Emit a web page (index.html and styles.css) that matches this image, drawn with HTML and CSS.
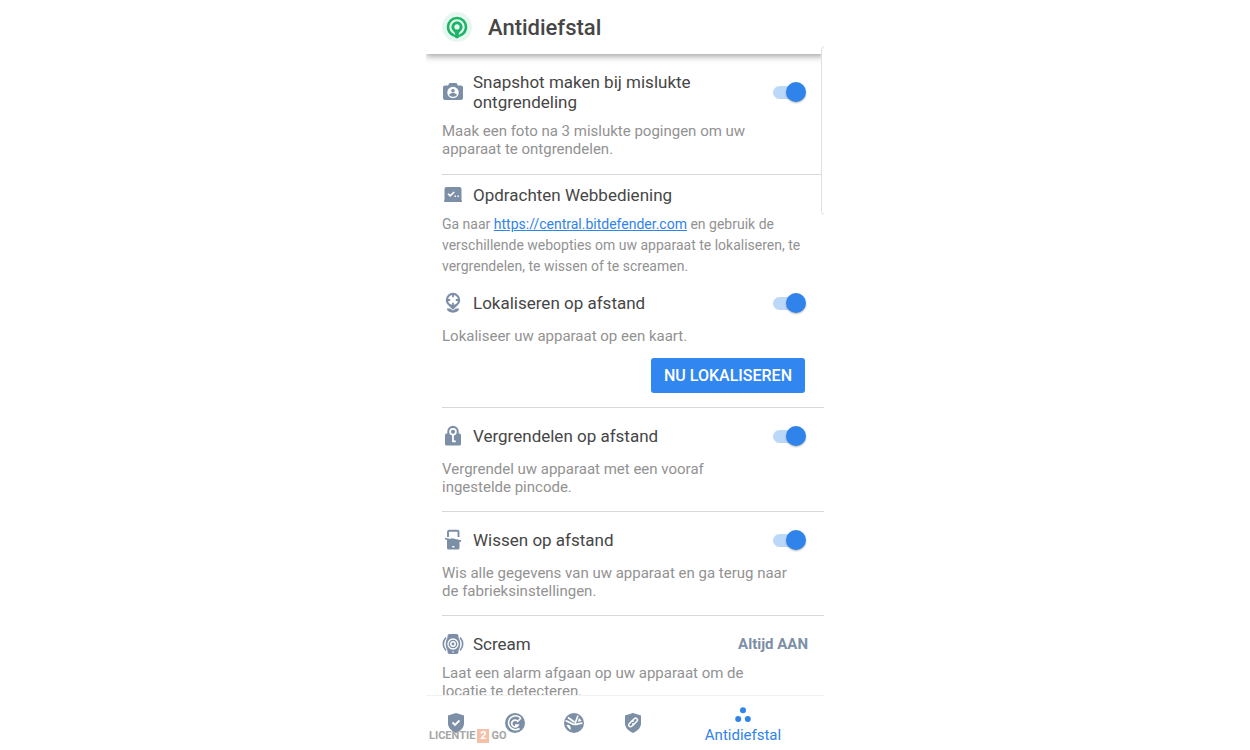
FILE: index.html
```html
<!DOCTYPE html>
<html lang="nl">
<head>
<meta charset="utf-8">
<meta name="viewport" content="width=device-width, initial-scale=1">
<title>Antidiefstal</title>
<link rel="stylesheet" href="styles.css">
</head>
<body>
<div class="app">
  <header class="topbar">
    <svg class="logo" viewBox="0 0 32 32" aria-hidden="true">
      <circle cx="16" cy="15" r="15" fill="#e6f7ef"/>
      <path d="M13 23.500c-3.500-1.600-6-4.500-6-8.500a9 9 0 0 1 18 0c0 4-2.500 6.900-6 8.500" fill="none" stroke="#1cb567" stroke-width="2.600"/>
      <path d="M16 9.300a5.600 5.600 0 0 0-5.600 5.600c0 3.300 3.600 4.600 4 7.600l-2.600.8c1.400 1.200 2.600 3.200 4.200 3.200s2.800-2 4.200-3.200l-2.600-.8c.4-3 4-4.300 4-7.600A5.600 5.600 0 0 0 16 9.300z" fill="#1cb567"/>
      <circle cx="16" cy="14.900" r="2.600" fill="#e6f7ef"/>
    </svg>
    <h1 class="page-title">Antidiefstal</h1>
  </header>

  <main class="content">
    <section class="card card-compact">
      <div class="row">
        <svg class="icon" viewBox="0 0 22 22" aria-hidden="true">
          <path fill="#7c8fa6" d="M7.500 2h7l1.500 2.500h3a2 2 0 0 1 2 2V17a2 2 0 0 1-2 2H3a2 2 0 0 1-2-2V6.500a2 2 0 0 1 2-2h3z"/>
          <circle cx="11" cy="11.500" r="5.700" fill="#fff"/>
          <circle cx="11" cy="9.700" r="1.800" fill="#7c8fa6"/>
          <path fill="#7c8fa6" d="M7 13.700c1.700-2.200 6.300-2.200 8 0-1.700 2.800-6.300 2.800-8 0z"/>
        </svg>
        <label class="title" for="snapshot">Snapshot maken bij mislukte ontgrendeling</label>
        <input class="switch" type="checkbox" role="switch" id="snapshot" checked>
      </div>
      <p class="text text-narrow">Maak een foto na 3 mislukte pogingen om uw apparaat te ontgrendelen.</p>
    </section>

    <section class="card card-web">
      <div class="row">
        <svg class="icon" viewBox="0 0 22 22" aria-hidden="true">
          <path fill="#7c8fa6" d="M4.500 3h13a2 2 0 0 1 2 2v10.500l.5 2.500H2l.5-2.500V5a2 2 0 0 1 2-2z"/>
          <path d="M6 9.700l2.200 2.200L12.200 8" fill="none" stroke="#fff" stroke-width="1.600"/>
          <path d="M12.500 12.200h1.500m1.400 0h1.500" stroke="#fff" stroke-width="1.500"/>
        </svg>
        <h2 class="title">Opdrachten Webbediening</h2>
      </div>
      <p class="text text-web">Ga naar <a class="link" href="https://central.bitdefender.com">https://central.bitdefender.com</a> en gebruik de verschillende webopties om uw apparaat te lokaliseren, te vergrendelen, te wissen of te screamen.</p>
    </section>

    <section class="card card-locate">
      <div class="row">
        <svg class="icon" viewBox="0 0 22 22" aria-hidden="true">
          <path fill="#7c8fa6" d="M11 .8a7.200 7.200 0 0 0-7.200 7.200c0 4 3.800 6.300 7.200 9.700 3.400-3.400 7.200-5.700 7.200-9.700A7.200 7.200 0 0 0 11 .8z"/>
          <circle cx="11" cy="8" r="5" fill="#fff"/>
          <path d="M11 3v2.200m0 5.600V13M6 8h2.200m5.600 0H16" stroke="#7c8fa6" stroke-width="1.800"/>
          <path fill="#7c8fa6" d="M4.800 16.600h3.400l2.800 2 2.800-2h3.400c-.6 5.400-11.800 5.400-12.400 0z"/>
        </svg>
        <label class="title" for="locate">Lokaliseren op afstand</label>
        <input class="switch" type="checkbox" role="switch" id="locate" checked>
      </div>
      <p class="text">Lokaliseer uw apparaat op een kaart.</p>
      <button class="button" type="button">NU LOKALISEREN</button>
    </section>

    <section class="card">
      <div class="row">
        <svg class="icon" viewBox="0 0 22 22" aria-hidden="true">
          <path fill="#7c8fa6" d="M11 .8a5.700 5.700 0 0 0-5.700 5.700v2H4.500A1.500 1.500 0 0 0 3 10v9a1.500 1.500 0 0 0 1.500 1.500h13A1.500 1.500 0 0 0 19 19v-9a1.500 1.500 0 0 0-1.500-1.500h-.8v-2A5.700 5.700 0 0 0 11 .8z"/>
          <circle cx="11" cy="6.800" r="2.900" fill="none" stroke="#fff" stroke-width="1.700"/>
          <path d="M11 9.500v7.700M11 16.400h2.800" fill="none" stroke="#fff" stroke-width="1.800"/>
        </svg>
        <label class="title" for="lock">Vergrendelen op afstand</label>
        <input class="switch" type="checkbox" role="switch" id="lock" checked>
      </div>
      <p class="text text-narrow">Vergrendel uw apparaat met een vooraf ingestelde pincode.</p>
    </section>

    <section class="card">
      <div class="row">
        <svg class="icon" viewBox="0 0 22 22" aria-hidden="true">
          <path d="M6 8V2.800a1 1 0 0 1 1-1h8.500a1 1 0 0 1 1 1V8" fill="none" stroke="#7c8fa6" stroke-width="1.900"/>
          <path d="M3 9.500l5 1.300 2-.6 9 2" fill="none" stroke="#7c8fa6" stroke-width="1.800"/>
          <path fill="#7c8fa6" d="M5 10l3 .8 2-.6 7.500 1.600v7.200a1.500 1.500 0 0 1-1.500 1.500H6.500A1.500 1.500 0 0 1 5 19z"/>
          <path d="M10.200 17.700h2.200" stroke="#fff" stroke-width="1.500"/>
        </svg>
        <label class="title" for="wipe">Wissen op afstand</label>
        <input class="switch" type="checkbox" role="switch" id="wipe" checked>
      </div>
      <p class="text">Wis alle gegevens van uw apparaat en ga terug naar de fabrieksinstellingen.</p>
    </section>

    <section class="card card-compact card-last">
      <div class="row">
        <svg class="icon" viewBox="0 0 22 22" aria-hidden="true">
          <path fill="#7c8fa6" d="M7.500 1h7a2 2 0 0 1 2 2v1.500q3.600 6.500 0 13V19a2 2 0 0 1-2 2h-7a2 2 0 0 1-2-2v-1.500q-3.600-6.500 0-13V3a2 2 0 0 1 2-2z"/>
          <path d="M3.900 4.500q-5.200 6.500 0 13M18.100 4.500q5.200 6.500 0 13" fill="none" stroke="#7c8fa6" stroke-width="1.600"/>
          <circle cx="11" cy="11" r="5" fill="none" stroke="#fff" stroke-width="1.300"/>
          <circle cx="11" cy="11" r="2.200" fill="none" stroke="#fff" stroke-width="1.500"/>
          <path d="M10.200 19h1.600" stroke="#fff" stroke-width="1.200"/>
        </svg>
        <h2 class="title">Scream</h2>
        <span class="status">Altijd AAN</span>
      </div>
      <p class="text text-narrow">Laat een alarm afgaan op uw apparaat om de locatie te detecteren.</p>
    </section>
  </main>

  <nav class="tabs">
    <a class="tab" href="#bescherming" aria-label="Bescherming">
      <svg class="tab-icon" viewBox="0 0 22 22" aria-hidden="true">
        <path fill="#7c8fa6" d="M11 1l8 2.500v7.700c0 4.800-3.800 7.800-8 9.800-4.200-2-8-5-8-9.800V3.500z"/>
        <path d="M7.500 10.500l2.500 2.500 4.500-4.500" fill="none" stroke="#fff" stroke-width="1.800"/>
      </svg>
    </a>
    <a class="tab" href="#scanner" aria-label="Scanner">
      <svg class="tab-icon" viewBox="0 0 22 22" aria-hidden="true">
        <circle cx="11" cy="11" r="10" fill="#7c8fa6"/>
        <path d="M16.500 5.800A7 7 0 1 0 15.500 16.500" fill="none" stroke="#fff" stroke-width="1.600"/>
        <path d="M17 6l-3.300 3.300A3.400 3.400 0 1 0 14 13.200h-3" fill="none" stroke="#fff" stroke-width="1.700"/>
      </svg>
    </a>
    <a class="tab" href="#web" aria-label="Webbescherming">
      <svg class="tab-icon" viewBox="0 0 22 22" aria-hidden="true">
        <circle cx="11" cy="11" r="10" fill="#7c8fa6"/>
        <path d="M2.600 8.800c3.400 0 5 3.700 8.900 3.700 3 0 4.500-1.300 7.900-1.300M5 5.500l6.300 4.500M15 3.500L12 11.500" fill="none" stroke="#fff" stroke-width="1.700"/>
        <path fill="#fff" d="M3.500 13c3-.8 4.500 1.300 4.300 4.700-2-.6-3.500-2.700-4.300-4.700zM16 6c1.300.9 2 1.800 2.500 3.100l-3.700.7z"/>
      </svg>
    </a>
    <a class="tab" href="#vpn" aria-label="VPN">
      <svg class="tab-icon" viewBox="0 0 22 22" aria-hidden="true">
        <path fill="#7c8fa6" d="M11 1l8 2.500v7.700c0 4.800-3.800 7.800-8 9.800-4.200-2-8-5-8-9.800V3.500z"/>
        <g fill="none" stroke="#fff" stroke-width="1.500">
          <path d="M12.400 11.700l-2.600 2.600a1.800 1.800 0 0 1-2.600-2.600l2.200-2.200a1.800 1.800 0 0 1 2.400-.1"/>
          <path d="M9.700 9.300l2.600-2.600a1.800 1.800 0 0 1 2.600 2.600l-2.200 2.200a1.800 1.800 0 0 1-2.400.1"/>
        </g>
      </svg>
    </a>
    <a class="tab tab-active" href="#antidiefstal" aria-current="page">
      <svg class="dots" viewBox="0 0 16 16" aria-hidden="true">
        <circle cx="8" cy="3.300" r="3" fill="#3083ea"/>
        <circle cx="3.200" cy="12" r="3" fill="#3083ea"/>
        <circle cx="12.800" cy="12" r="3" fill="#3083ea"/>
      </svg>
      <span>Antidiefstal</span>
    </a>
  </nav>

  <div class="watermark"><span>LICENTIE</span><span class="watermark-box">2</span><span>GO</span></div>
  <div class="edge-handle"></div>
</div>
</body>
</html>
```
FILE: styles.css
```css
* {
  box-sizing: border-box;
}

body {
  margin: 0;
  background: #fff;
  color: #464646;
  font-family: Roboto, "Liberation Sans", sans-serif;
}

.app {
  position: relative;
  display: flex;
  flex-direction: column;
  max-width: 398px;
  height: 100vh;
  margin: 0 auto;
  overflow: hidden;
}

.topbar {
  display: flex;
  flex: none;
  align-items: center;
  gap: 15px;
  height: 54px;
  padding: 2px 15px 0;
  background: #fff;
  box-shadow: 0 2px 7px rgba(0, 0, 0, 0.4);
  z-index: 1;
}

.logo {
  width: 32px;
  height: 32px;
}

.page-title {
  margin: 0;
  font-size: 22px;
  font-weight: 500;
  line-height: 28px;
}

.content {
  flex: 1;
  min-height: 0;
  padding-left: 16px;
  overflow: hidden;
}

.card {
  padding: 18px 16px 15px 0;
  border-bottom: 1px solid #d9d9d9;
}

.card-web {
  padding-top: 10px;
  padding-bottom: 0;
  border-bottom: 0;
}

.card-locate {
  padding-top: 16px;
  padding-bottom: 14px;
}

.card-last {
  border-bottom: 0;
}

.row {
  display: flex;
  align-items: center;
  gap: 9px;
}

.icon {
  flex: none;
  width: 22px;
  height: 22px;
  margin: -1px 0;
}

.title {
  flex: 1;
  margin: 0;
  padding-right: 40px;
  font-size: 17px;
  font-weight: 400;
  line-height: 20px;
}

.switch {
  position: relative;
  flex: none;
  width: 35px;
  height: 20px;
  margin: 0;
  appearance: none;
}

.switch::before {
  content: "";
  position: absolute;
  inset: 4px 4px 3px 0;
  border-radius: 7px;
  background: #bcd8f8;
}

.switch::after {
  content: "";
  position: absolute;
  top: 0;
  right: 2px;
  width: 20px;
  height: 20px;
  border-radius: 50%;
  background: #3083ea;
  box-shadow: 0 1px 2px rgba(0, 0, 0, 0.3);
}

.status {
  color: #7c8fa6;
  font-size: 15px;
  font-weight: 700;
  line-height: 20px;
}

.text {
  max-width: 350px;
  margin: 14px 0 0;
  color: #929292;
  font-size: 15px;
  line-height: 18px;
}

.text-narrow {
  max-width: 320px;
}

.card-compact .text {
  margin-top: 10px;
}

.card-compact {
  padding-bottom: 16px;
}

.text-web {
  max-width: none;
  margin-top: 9px;
  font-size: 14px;
  line-height: 21px;
}

.link {
  color: #3083ea;
}

.button {
  display: block;
  height: 35px;
  margin: 13px 3px 0 auto;
  padding: 0 13px;
  border: 0;
  border-radius: 3px;
  background: #3186ef;
  color: #fff;
  font: 500 16px/20px Roboto, "Liberation Sans", sans-serif;
}

.tabs {
  display: grid;
  flex: none;
  grid-template-columns: repeat(4, 59px) 1fr;
  height: 55px;
  border-top: 1px solid #f2f2f2;
  background: #fff;
}

.tab {
  display: flex;
  flex-direction: column;
  align-items: center;
  padding-top: 16px;
  color: #3083ea;
  font-size: 15px;
  line-height: 20px;
  text-decoration: none;
}

.tab-active {
  gap: 2px;
  padding-top: 11px;
}

.tab-icon {
  width: 22px;
  height: 22px;
}

.dots {
  width: 16px;
  height: 16px;
}

.watermark {
  position: absolute;
  bottom: 7px;
  left: 3px;
  display: flex;
  align-items: center;
  gap: 2px;
  color: #a6a6a6;
  font-size: 11px;
  font-weight: 700;
  line-height: 14px;
}

.watermark-box {
  width: 12px;
  background: #f5c0a8;
  color: #fff;
  text-align: center;
}

.edge-handle {
  position: absolute;
  top: 46px;
  right: -5px;
  width: 8px;
  height: 169px;
  border: 1px solid #e0e0e0;
  border-radius: 4px;
  background: #fff;
  z-index: 2;
}
```
